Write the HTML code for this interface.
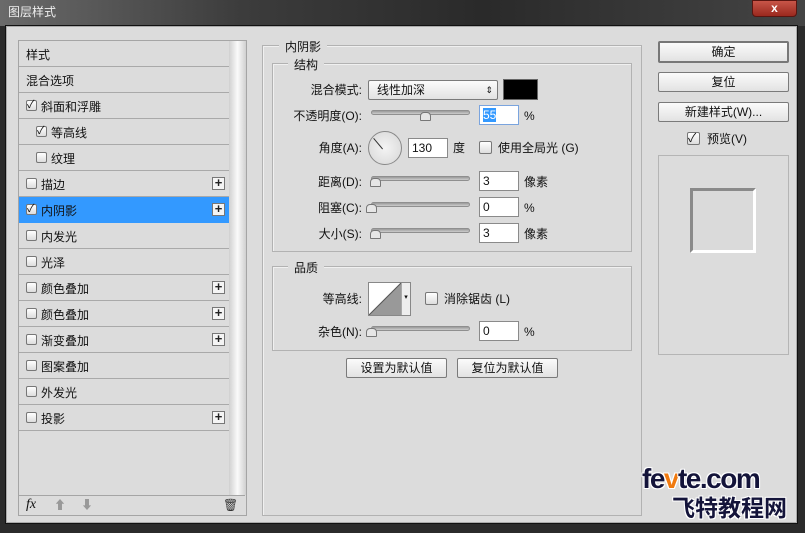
<!DOCTYPE html><html><head><meta charset="utf-8"><style>
*{margin:0;padding:0;box-sizing:border-box}
body{width:805px;height:533px;overflow:hidden;background:#2b2b2b;font-family:"Liberation Sans","Noto Sans CJK SC",sans-serif;font-size:12px;color:#111;position:relative}
.a{position:absolute}
.t{position:absolute;white-space:nowrap;line-height:14px}
.r{position:absolute;white-space:nowrap;line-height:14px;right:443px;text-align:right}
.title{left:0;top:0;width:805px;height:26px;background:linear-gradient(90deg,#6a6a6a 0,#3c3c3c 30%,#2a2a2a 60%,#444 100%)}
.dlg{left:5px;top:25px;width:793px;height:499px;background:#dcdcdc;border:1px solid #111;box-shadow:inset 0 0 0 1px #aaa}
.row{position:absolute;left:19px;width:210px;height:26px;border-bottom:1px solid #a9a9a9}
.row span{position:absolute;top:5px;white-space:nowrap}
.cb{position:absolute;width:11px;height:11px;border:1px solid #777;border-radius:2px;background:linear-gradient(#fff,#ddd)}
.plus{position:absolute;right:4px;top:6px;width:13px;height:13px;border:1px solid #777;background:#f4f4f4;font-size:13px;line-height:10px;text-align:center;font-weight:bold;color:#222}
.grp{position:absolute;border:1px solid #b2b2b2;box-shadow:1px 1px 0 #f0f0f0 inset}
.leg{position:absolute;background:#dcdcdc;padding:0 6px;white-space:nowrap;font-size:12px}
.sl{position:absolute;height:5px;border:1px solid #8f8f8f;border-radius:3px;background:linear-gradient(#999,#ccc)}
.th{position:absolute;width:11px;height:9px;background:#e6e6e6;border:1px solid #777;border-radius:4px 4px 1px 1px}
.in{position:absolute;height:20px;background:#fff;border:1px solid #8a8a8a;padding:2px 3px;font-size:12px;line-height:14px}
.btn{position:absolute;height:20px;border:1px solid #7a7a7a;border-radius:2px;background:linear-gradient(#fbfbfb,#e2e2e2);text-align:center;line-height:18px;white-space:nowrap}
</style></head><body>
<div class="a title"></div>
<div class="t" style="left:8px;top:5px;color:#eee;font-size:12px">图层样式</div>
<div class="a" style="left:752px;top:0;width:45px;height:17px;background:linear-gradient(#c85548,#9a281e);border:1px solid #5a1510;border-radius:0 0 4px 4px;color:#fff;text-align:center;font-weight:bold;line-height:14px">x</div>
<div class="a dlg"></div>
<!-- left panel -->
<div class="a" style="left:18px;top:40px;width:229px;height:476px;border:1px solid #a5a5a5;background:#dcdcdc"></div>
<div class="a" style="left:229px;top:41px;width:17px;height:454px;background:linear-gradient(90deg,#d0d0d0,#fafafa 50%,#d0d0d0)"></div>
<div class="row" style="top:41px"><span style="left:7px">样式</span></div>
<div class="row" style="top:67px"><span style="left:7px">混合选项</span></div>
<div class="row" style="top:93px"><div class="cb" style="left:7px;top:7px;font-size:11px;line-height:9px">✓</div><span style="left:22px">斜面和浮雕</span></div>
<div class="row" style="top:119px"><div class="cb" style="left:17px;top:7px;font-size:11px;line-height:9px">✓</div><span style="left:32px">等高线</span></div>
<div class="row" style="top:145px"><div class="cb" style="left:17px;top:7px"></div><span style="left:32px">纹理</span></div>
<div class="row" style="top:171px"><div class="cb" style="left:7px;top:7px"></div><span style="left:22px">描边</span><div class="plus">+</div></div>
<div class="row" style="top:197px;background:#3399ff;border-color:#3399ff"><div class="cb" style="left:7px;top:7px;font-size:11px;line-height:9px">✓</div><span style="left:22px">内阴影</span><div class="plus">+</div></div>
<div class="row" style="top:223px"><div class="cb" style="left:7px;top:7px"></div><span style="left:22px">内发光</span></div>
<div class="row" style="top:249px"><div class="cb" style="left:7px;top:7px"></div><span style="left:22px">光泽</span></div>
<div class="row" style="top:275px"><div class="cb" style="left:7px;top:7px"></div><span style="left:22px">颜色叠加</span><div class="plus">+</div></div>
<div class="row" style="top:301px"><div class="cb" style="left:7px;top:7px"></div><span style="left:22px">颜色叠加</span><div class="plus">+</div></div>
<div class="row" style="top:327px"><div class="cb" style="left:7px;top:7px"></div><span style="left:22px">渐变叠加</span><div class="plus">+</div></div>
<div class="row" style="top:353px"><div class="cb" style="left:7px;top:7px"></div><span style="left:22px">图案叠加</span></div>
<div class="row" style="top:379px"><div class="cb" style="left:7px;top:7px"></div><span style="left:22px">外发光</span></div>
<div class="row" style="top:405px"><div class="cb" style="left:7px;top:7px"></div><span style="left:22px">投影</span><div class="plus">+</div></div>
<div class="a" style="left:19px;top:495px;width:226px;height:1px;background:#a5a5a5"></div>
<div class="t" style="left:26px;top:498px;font-style:italic;font-family:'Liberation Serif',serif;font-size:14px">fx</div>
<div class="t" style="left:54px;top:498px;color:#999">⬆</div>
<div class="t" style="left:81px;top:498px;color:#999">⬇</div>
<div class="t" style="left:223px;top:498px;color:#333">🗑</div>
<!-- middle -->
<div class="grp" style="left:262px;top:45px;width:380px;height:471px"></div>
<div class="leg" style="left:279px;top:38px">内阴影</div>
<div class="grp" style="left:272px;top:63px;width:360px;height:189px"></div>
<div class="leg" style="left:288px;top:56px">结构</div>
<div class="r" style="top:83px">混合模式:</div>
<div class="btn" style="left:368px;top:80px;width:130px;text-align:left;padding-left:8px;border-radius:2px">线性加深<span style="position:absolute;right:4px;top:0;font-size:9px">⇕</span></div>
<div class="a" style="left:503px;top:79px;width:35px;height:21px;background:#000;border:1px solid #666"></div>
<div class="r" style="top:109px">不透明度(O):</div>
<div class="sl" style="left:371px;top:110px;width:99px"></div><div class="th" style="left:420px;top:112px"></div>
<div class="in" style="left:479px;top:105px;width:40px;border-color:#7aa4de"><span style="background:#3399ff;color:#fff">55</span></div>
<div class="t" style="left:524px;top:109px">%</div>
<div class="a" style="left:368px;top:131px;width:34px;height:34px;border-radius:50%;border:1px solid #888;background:radial-gradient(#f4f4f4,#d6d6d6)"></div>
<div class="a" style="left:374px;top:138px;width:14px;height:1px;background:#333;transform-origin:0 0;transform:rotate(50deg)"></div>
<div class="r" style="top:141px">角度(A):</div>
<div class="in" style="left:408px;top:138px;width:40px">130</div>
<div class="t" style="left:453px;top:141px">度</div>
<div class="cb" style="left:479px;top:141px;width:13px;height:13px"></div>
<div class="t" style="left:498px;top:141px">使用全局光 (G)</div>
<div class="r" style="top:175px">距离(D):</div>
<div class="sl" style="left:371px;top:176px;width:99px"></div><div class="th" style="left:370px;top:178px"></div>
<div class="in" style="left:479px;top:171px;width:40px">3</div><div class="t" style="left:524px;top:175px">像素</div>
<div class="r" style="top:201px">阻塞(C):</div>
<div class="sl" style="left:371px;top:202px;width:99px"></div><div class="th" style="left:366px;top:204px"></div>
<div class="in" style="left:479px;top:197px;width:40px">0</div><div class="t" style="left:524px;top:201px">%</div>
<div class="r" style="top:227px">大小(S):</div>
<div class="sl" style="left:371px;top:228px;width:99px"></div><div class="th" style="left:370px;top:230px"></div>
<div class="in" style="left:479px;top:223px;width:40px">3</div><div class="t" style="left:524px;top:227px">像素</div>
<div class="grp" style="left:272px;top:266px;width:360px;height:85px"></div>
<div class="leg" style="left:288px;top:259px">品质</div>
<div class="r" style="top:292px">等高线:</div>
<div class="a" style="left:368px;top:282px;width:43px;height:34px;border:1px solid #888;background:#fff"></div>
<svg class="a" style="left:369px;top:283px" width="32" height="32"><polygon points="0,32 32,0 32,32" fill="#999"/><line x1="0" y1="32" x2="32" y2="0" stroke="#555"/></svg>
<div class="a" style="left:401px;top:283px;width:9px;height:32px;background:#eee;border-left:1px solid #aaa;font-size:7px;text-align:center;line-height:30px">▾</div>
<div class="cb" style="left:425px;top:292px;width:13px;height:13px"></div>
<div class="t" style="left:444px;top:292px">消除锯齿 (L)</div>
<div class="r" style="top:325px">杂色(N):</div>
<div class="sl" style="left:371px;top:326px;width:99px"></div><div class="th" style="left:366px;top:328px"></div>
<div class="in" style="left:479px;top:321px;width:40px">0</div><div class="t" style="left:524px;top:325px">%</div>
<div class="btn" style="left:346px;top:358px;width:101px">设置为默认值</div>
<div class="btn" style="left:457px;top:358px;width:101px">复位为默认值</div>
<!-- right -->
<div class="btn" style="left:658px;top:41px;width:131px;height:22px;border:2px solid #777">确定</div>
<div class="btn" style="left:658px;top:72px;width:131px">复位</div>
<div class="btn" style="left:658px;top:102px;width:131px">新建样式(W)...</div>
<div class="cb" style="left:687px;top:132px;width:13px;height:13px;font-size:12px;line-height:11px">✓</div>
<div class="t" style="left:707px;top:132px">预览(V)</div>
<div class="a" style="left:658px;top:155px;width:131px;height:200px;border:1px solid #b5b5b5"></div>
<div class="a" style="left:690px;top:188px;width:66px;height:65px;border:3px solid #fff;border-top-color:#8a8a8a;border-left-color:#8a8a8a;background:#dadada"></div>
<!-- watermark -->
<div class="t" style="left:642px;top:463px;font-size:28px;line-height:32px;font-weight:bold;color:#14143a;letter-spacing:-1.5px;text-shadow:-1px -1px 0 #fff,1px 1px 0 #fff,1px -1px 0 #fff,-1px 1px 0 #fff">fe<span style="color:#f07a10">v</span>te.com</div>
<div class="t" style="left:672px;top:495px;font-size:23px;line-height:27px;font-weight:bold;color:#14143a;text-shadow:-1px -1px 0 #fff,1px 1px 0 #fff,1px -1px 0 #fff,-1px 1px 0 #fff">飞特教程网</div>
</body></html>
